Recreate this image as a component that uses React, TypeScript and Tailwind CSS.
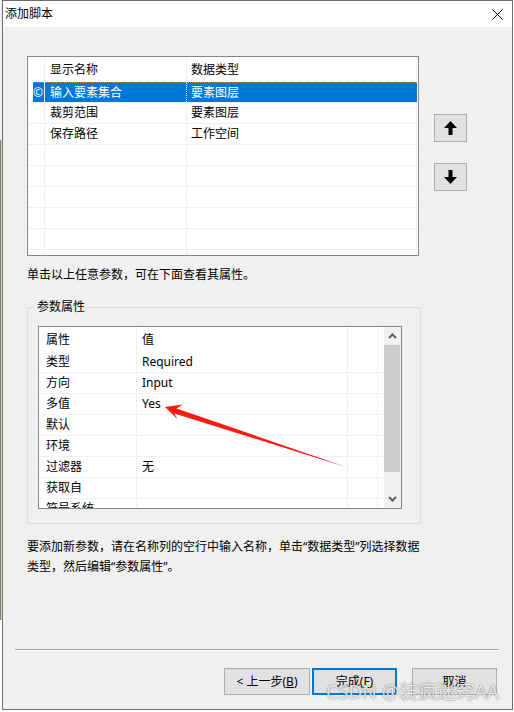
import React from 'react';

const font = "[font-family:'Noto_Sans','Noto_Sans_CJK_SC',sans-serif]";

const topRows = [
  { name: '输入要素集合', type: '要素图层', selected: true },
  { name: '裁剪范围', type: '要素图层' },
  { name: '保存路径', type: '工作空间' },
  { name: '', type: '' },
  { name: '', type: '' },
  { name: '', type: '' },
  { name: '', type: '' },
  { name: '', type: '' },
  { name: '', type: '' },
];

const propRows = [
  ['类型', 'Required'],
  ['方向', 'Input'],
  ['多值', 'Yes'],
  ['默认', ''],
  ['环境', ''],
  ['过滤器', '无'],
  ['获取自', ''],
  ['符号系统', ''],
];

const ArrowButton = ({ dir }: { dir: 'up' | 'down' }) => (
  <button className="w-[33px] h-[28px] bg-[#e1e1e1] border border-[#adadad] flex items-center justify-center">
    <svg width="13" height="14" viewBox="0 0 13 14" className={dir === 'down' ? 'rotate-180' : ''}>
      <polygon points="6.5,0 13,7 8.5,7 8.5,14 4.5,14 4.5,7 0,7" fill="#000" />
    </svg>
  </button>
);

const Chevron = ({ dir }: { dir: 'up' | 'down' }) => (
  <svg width="9" height="6" viewBox="0 0 9 6">
    <polyline
      points={dir === 'up' ? '1,5 4.5,1.5 8,5' : '1,1 4.5,4.5 8,1'}
      fill="none"
      stroke="#606060"
      strokeWidth="2"
    />
  </svg>
);

const DialogButton = ({ children, primary }: { children: React.ReactNode; primary?: boolean }) => (
  <button
    className={
      primary
        ? 'w-[85px] h-[27px] bg-[#e1e1e1] border-2 border-[#0078d7] text-[12px] text-black flex items-center justify-center'
        : 'w-[85px] h-[27px] bg-[#e1e1e1] border border-[#adadad] text-[12px] text-black flex items-center justify-center'
    }
  >
    {children}
  </button>
);

export default function App() {
  return (
    <div className={`w-[514px] h-[712px] bg-white flex text-black text-[12px] ${font}`}>
      {/* sliver of the window behind */}
      <div className="w-[2px] flex flex-col">
        <div className="h-[140px] bg-[#f0f0f0]" />
        <div className="h-[480px] bg-[#d3ecc0] border-l border-[#7a7a7a]" />
      </div>

      {/* dialog */}
      <div className="w-[511px] h-[710px] border border-[#6e6e6e] bg-[#f0f0f0] flex flex-col">
        {/* title bar */}
        <div className="h-[26px] bg-white flex items-center justify-between pl-[2px] pr-[9px]">
          <span className="leading-none">添加脚本</span>
          <svg width="11" height="11" viewBox="0 0 11 11">
            <path d="M0.5 0.5 L10.5 10.5 M10.5 0.5 L0.5 10.5" stroke="#000" strokeWidth="1" />
          </svg>
        </div>

        <div className="flex-1 flex flex-col pl-[24px]">
          {/* parameter list + move buttons */}
          <div className="flex mt-[29px]">
            <div className="w-[392px] h-[200px] border border-[#828790] bg-white overflow-hidden">
              <div className="flex h-[25px]">
                <div className="w-[17px] border-r border-[#f0f0f0]" />
                <div className="w-[142px] border-r border-[#f0f0f0] pl-[5px] flex items-center">显示名称</div>
                <div className="w-[230px] border-r border-[#f0f0f0] pl-[4px] flex items-center">数据类型</div>
              </div>
              {topRows.map((r, i) => (
                <div key={i} className="flex h-[21px] border-b border-[#f0f0f0]">
                  <div className="w-[17px] border-r border-[#f0f0f0] flex">
                    {r.selected && (
                      <div className="ml-[5px] w-[11px] bg-[#0078d7] text-white overflow-hidden border-t border-dotted border-[#d08a40] leading-[19px]">
                        ©
                      </div>
                    )}
                  </div>
                  <div
                    className={
                      r.selected
                        ? 'w-[142px] border-r border-white pl-[5px] flex items-center bg-[#0078d7] text-white border-t border-t-[#d08a40] border-dotted'
                        : 'w-[142px] border-r border-[#f0f0f0] pl-[5px] flex items-center'
                    }
                  >
                    {r.name}
                  </div>
                  <div
                    className={
                      r.selected
                        ? 'w-[230px] pl-[4px] flex items-center bg-[#0078d7] text-white border-t border-dotted border-[#d08a40]'
                        : 'w-[230px] border-r border-[#f0f0f0] pl-[4px] flex items-center'
                    }
                  >
                    {r.type}
                  </div>
                </div>
              ))}
            </div>
            <div className="ml-[15px] mt-[58px] flex flex-col gap-[21px]">
              <ArrowButton dir="up" />
              <ArrowButton dir="down" />
            </div>
          </div>

          <p className="mt-[11px] leading-[16px] whitespace-nowrap">单击以上任意参数，可在下面查看其属性。</p>

          {/* group box */}
          <div className="relative mt-[24px] w-[394px] h-[217px] border border-[#dcdcdc] pl-[10px] pt-[18px]">
            <span className="absolute -top-[9px] left-[7px] bg-[#f0f0f0] px-[2px] leading-[16px]">参数属性</span>

            <div className="relative w-[364px] h-[183px] border border-[#828790] bg-white flex overflow-hidden">
              <div className="w-[345px] flex flex-col">
                <div className="flex h-[25px] shrink-0">
                  <div className="w-[98px] border-r border-[#f0f0f0] pl-[7px] flex items-center">属性</div>
                  <div className="w-[211px] border-r border-[#f0f0f0] pl-[5px] flex items-center">值</div>
                  <div className="w-[30px] border-r border-[#f0f0f0]" />
                </div>
                {propRows.map(([k, v]) => (
                  <div key={k} className="flex h-[21px] shrink-0 border-b border-[#f0f0f0]">
                    <div className="w-[98px] border-r border-[#f0f0f0] pl-[7px] flex items-center">{k}</div>
                    <div className="w-[211px] border-r border-[#f0f0f0] pl-[5px] flex items-center">{v}</div>
                    <div className="w-[30px] border-r border-[#f0f0f0]" />
                  </div>
                ))}
              </div>
              {/* scrollbar */}
              <div className="w-[17px] bg-[#f0f0f0] flex flex-col">
                <div className="h-[18px] flex items-center justify-center">
                  <Chevron dir="up" />
                </div>
                <div className="h-[127px] bg-[#cdcdcd] mr-[1px]" />
                <div className="flex-1 flex items-end justify-center pb-[6px]">
                  <Chevron dir="down" />
                </div>
              </div>

              {/* red annotation arrow */}
              <svg className="absolute left-0 top-0 pointer-events-none" width="362" height="181" viewBox="39 327 362 181">
                <defs>
                  <linearGradient id="fade" x1="165" y1="407" x2="352" y2="469" gradientUnits="userSpaceOnUse">
                    <stop offset="0" stopColor="#ff1a10" />
                    <stop offset="0.85" stopColor="#ff1a10" />
                    <stop offset="1" stopColor="#ffb0a8" />
                  </linearGradient>
                </defs>
                <polygon
                  points="165,407 182.4,404.6 176.6,408.4 352,469 174.4,413.4 177.6,419.2"
                  fill="url(#fade)"
                />
              </svg>
            </div>
          </div>

          <p className="mt-[13px] leading-[20px] whitespace-nowrap">
            要添加新参数，请在名称列的空行中输入名称，单击“数据类型”列选择数据
            <br />
            类型，然后编辑“参数属性”。
          </p>

          {/* footer */}
          <div className="mt-auto -ml-[12px] pb-[14px]">
            <div className="w-[484px] border-t border-[#a0a0a0] border-b border-b-white" />
            <div className="relative mt-[17px] flex justify-end pr-[15px]">
              <button className="w-[86px] h-[27px] bg-[#e1e1e1] border border-[#adadad] text-[12px] flex items-center justify-center">
                &lt; 上一步(<span className="underline">B</span>)
              </button>
              <div className="ml-[2px]">
                <DialogButton primary>
                  完成(<span className="underline">F</span>)
                </DialogButton>
              </div>
              <div className="ml-[15px]">
                <DialogButton>取消</DialogButton>
              </div>
              <span className="absolute right-[13px] top-[13px] text-[19px] leading-[22px] text-[#f6f6f6]/90 whitespace-nowrap [text-shadow:0_0_1.5px_rgba(0,0,0,0.6)] pointer-events-none">
                CSDN @装疯迷窍AA
              </span>
            </div>
          </div>
        </div>
      </div>
    </div>
  );
}
